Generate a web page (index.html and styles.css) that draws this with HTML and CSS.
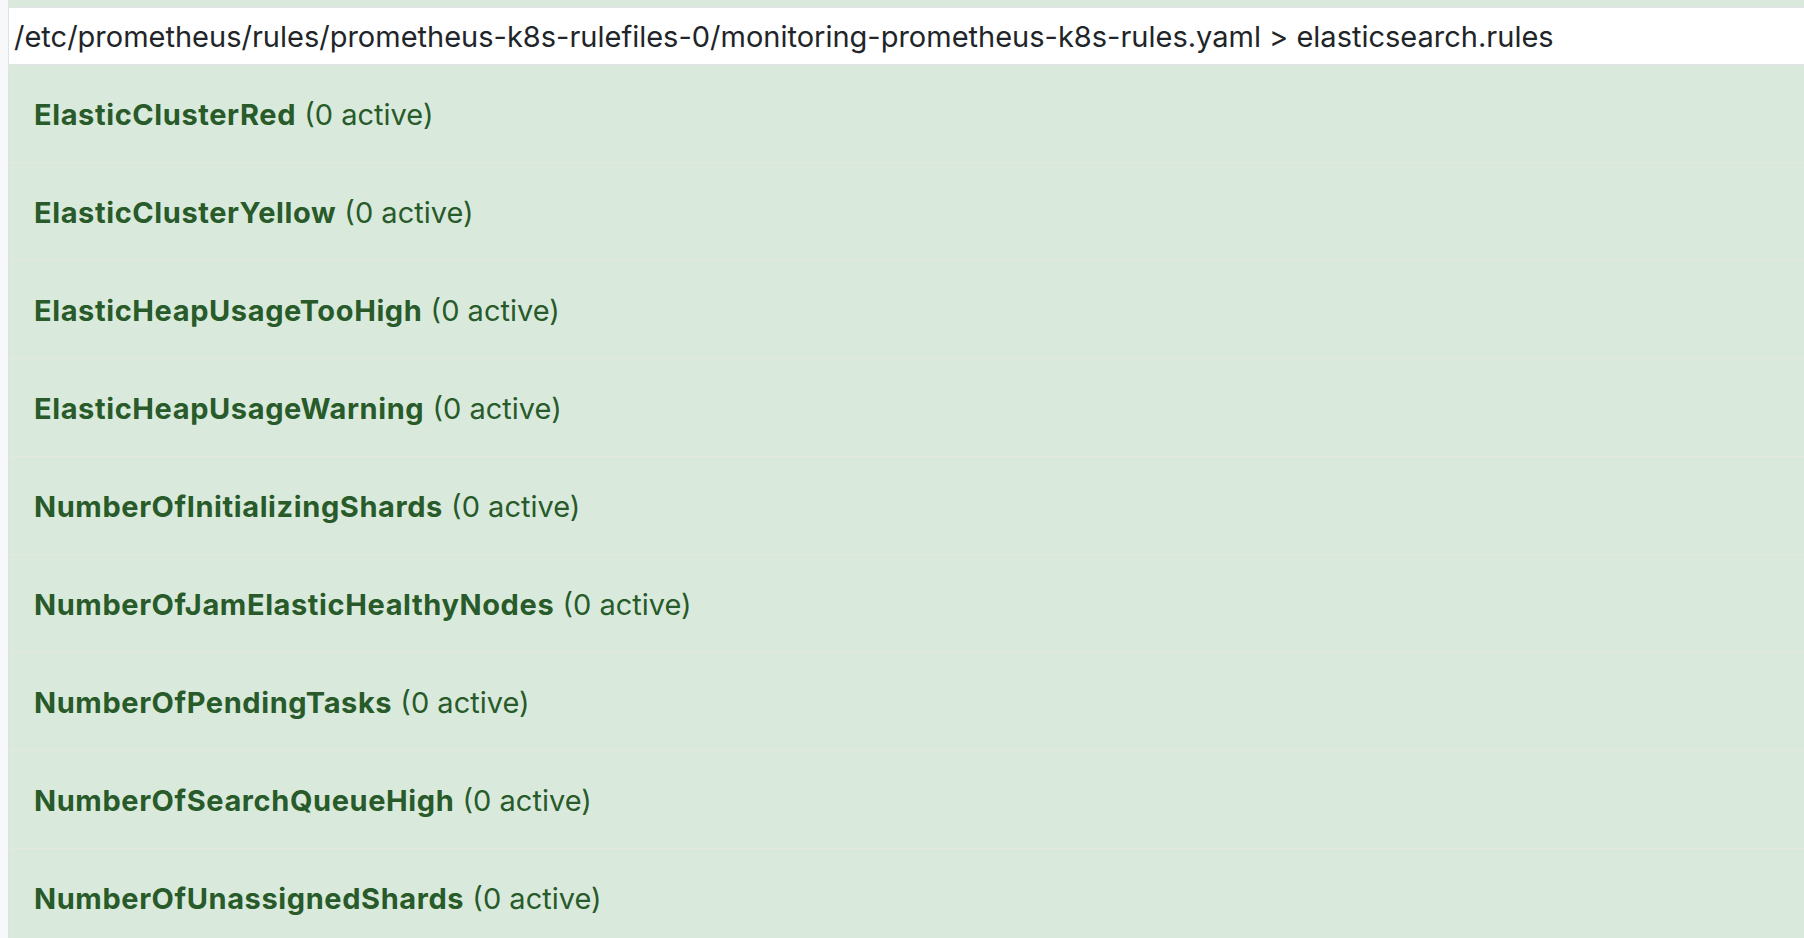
FILE: index.html
```html
<!DOCTYPE html>
<html lang="en">
<head>
<meta charset="utf-8">
<title>Alerts</title>
<link rel="stylesheet" href="styles.css">
</head>
<body>
<div class="page">
  <div class="table">
    <div class="prev-row"></div>
    <div class="group-header">/etc/prometheus/rules/prometheus-k8s-rulefiles-0/monitoring-prometheus-k8s-rules.yaml &gt; elasticsearch.rules</div>
    <div class="rule-row"><p class="rule-text"><span class="rule-name">ElasticClusterRed</span> <span class="rule-count">(0 active)</span></p></div>
    <div class="rule-row"><p class="rule-text"><span class="rule-name">ElasticClusterYellow</span> <span class="rule-count">(0 active)</span></p></div>
    <div class="rule-row"><p class="rule-text"><span class="rule-name">ElasticHeapUsageTooHigh</span> <span class="rule-count">(0 active)</span></p></div>
    <div class="rule-row"><p class="rule-text"><span class="rule-name">ElasticHeapUsageWarning</span> <span class="rule-count">(0 active)</span></p></div>
    <div class="rule-row"><p class="rule-text"><span class="rule-name">NumberOfInitializingShards</span> <span class="rule-count">(0 active)</span></p></div>
    <div class="rule-row"><p class="rule-text"><span class="rule-name">NumberOfJamElasticHealthyNodes</span> <span class="rule-count">(0 active)</span></p></div>
    <div class="rule-row"><p class="rule-text"><span class="rule-name">NumberOfPendingTasks</span> <span class="rule-count">(0 active)</span></p></div>
    <div class="rule-row"><p class="rule-text"><span class="rule-name">NumberOfSearchQueueHigh</span> <span class="rule-count">(0 active)</span></p></div>
    <div class="rule-row"><p class="rule-text"><span class="rule-name">NumberOfUnassignedShards</span> <span class="rule-count">(0 active)</span></p></div>
  </div>
</div>
</body>
</html>
```
FILE: styles.css
```css
html, body {
  margin: 0;
  padding: 0;
  height: 100%;
  overflow: hidden;
}
body {
  background: #f7f8f9;
  font-family: Inter, "Noto Sans", "Liberation Sans", sans-serif;
}
.page {
  padding-left: 8px;
  height: 100%;
}
.table {
  border-left: 1px solid #dee2e6;
  display: flex;
  flex-direction: column;
}
.prev-row {
  height: 7px;
  background: #d9eadc;
  border-bottom: 1px solid #dee2e6;
}
.group-header {
  height: 56px;
  background: #ffffff;
  border-bottom: 1px solid #dee2e6;
  color: #212529;
  font-size: 29px;
  display: flex;
  align-items: center;
  padding-left: 5px;
  white-space: nowrap;
}
.rule-row {
  height: 97px;
  flex: none;
  box-sizing: border-box;
  height: 98px;
  background: #d9eadc;
  border-bottom: 1px solid #e3e8e3;
  display: flex;
  align-items: center;
  padding: 2px 0 0 25px;
  color: #285a2a;
  font-size: 29px;
}
.rule-text {
  margin: 0;
  white-space: nowrap;
}
.rule-name {
  font-weight: 700;
  letter-spacing: 0.6px;
}
.rule-count {
  font-weight: 400;
}
```
